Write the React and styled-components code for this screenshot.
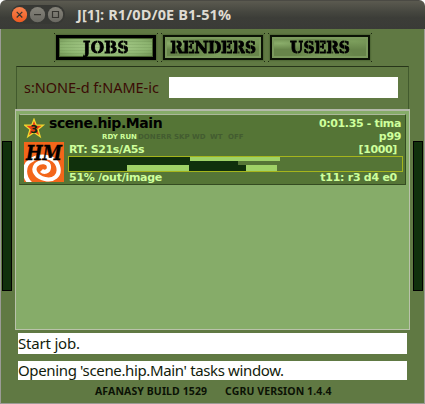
import React from 'react';
import styled, { createGlobalStyle } from 'styled-components';

const GlobalStyle = createGlobalStyle`
  * { box-sizing: border-box; }
  body { margin: 0; background: #fff; }
`;

const Window = styled.div`
  width: 425px;
  height: 404px;
  display: flex;
  flex-direction: column;
  border-radius: 6px 6px 0 0;
  overflow: hidden;
  font-family: 'Noto Sans', sans-serif;
  white-space: nowrap;
`;

const TitleBar = styled.header`
  height: 29px;
  flex: none;
  display: flex;
  align-items: center;
  padding-left: 11px;
  border-top: 1px solid #4b4a44;
  background: linear-gradient(#5b5a50, #45463f 40%, #3c3d38 60%, #3a3b37);
`;

const Controls = styled.svg`
  width: 54px;
  height: 20px;
  flex: none;
  display: block;
`;

const Title = styled.h1`
  margin: 0 0 0 12px;
  font: 700 14.5px/28px 'Open Sans', sans-serif;
  letter-spacing: ${p => p.$ls}px;
  color: #dfdbd2;
`;

const Body = styled.main`
  flex: 1;
  min-height: 0;
  display: flex;
  background: #607943;
  border: 1px solid #9b9b96;
  border-top: 0;
  padding-left: 1px;
  padding-right: 1px;
`;

const SideHandle = styled.div`
  width: 10px;
  height: 150px;
  flex: none;
  margin-top: 112px;
  background: #10300c;
  border: 1px solid #000;
`;

const Center = styled.div`
  width: 395px;
  flex: none;
  margin: 0 3px;
  display: flex;
  flex-direction: column;
`;

const Tabs = styled.nav`
  display: flex;
  gap: 3px;
  padding: 4px 0 0 39px;
`;

const dot = pos => `radial-gradient(#1b2710, #1b2710) ${pos} / 1px 1px no-repeat`;

const TabFrame = styled.div`
  width: 104px;
  height: 29px;
  padding: 2px;
  background: ${dot('0 0')}, ${dot('100% 0')}, ${dot('0 100%')}, ${dot('100% 100%')};
`;

const activeTexture =
  'repeating-linear-gradient(rgba(60,90,40,.12) 0 1px, transparent 1px 3px), radial-gradient(ellipse at 50% 45%, #a5ca88 20%, #8db470 65%, #6c8d50)';
const idleTexture =
  'radial-gradient(ellipse at 8% 30%, #8bae6b 0, transparent 30%), radial-gradient(ellipse at 55% 90%, #7c9e5c 0, transparent 40%), radial-gradient(ellipse at 85% 20%, #7c9e5c 0, transparent 35%), #67854a';

const Tab = styled.button`
  width: 100px;
  height: 25px;
  padding: 0;
  display: flex;
  align-items: center;
  justify-content: center;
  border: ${p => (p.$active ? '3px solid #000' : '2px solid #0b1205')};
  background: ${p => (p.$active ? activeTexture : idleTexture)};
  box-shadow: inset 0 0 0 ${p => (p.$active ? 1 : 2)}px ${p => (p.$active ? '#47632f' : '#7b9a5d')}, 0 0 1px 1px #526b38;
  color: #000;
  font: 700 17px/19px 'DejaVu Serif Condensed', 'DejaVu Serif', serif;
  font-stretch: condensed;
  letter-spacing: ${p => p.$ls}px;
`;

const StencilLetter = styled.span`
  color: transparent;
  -webkit-text-stroke: 0.8px transparent;
  background: ${p => (p.$cut
    ? `linear-gradient(90deg, #000 calc(${p.$cut}% - 0.6px), rgba(0,0,0,.45) calc(${p.$cut}% - 0.5px) calc(${p.$cut}% + 0.5px), #000 calc(${p.$cut}% + 0.6px))`
    : '#000')};
  -webkit-background-clip: text;
  background-clip: text;
`;

const FilterPanel = styled.section`
  height: 43px;
  margin: 4px 1px 0;
  display: flex;
  align-items: flex-start;
  border: 1px solid #425a2d;
  border-top-color: #273519;
  border-bottom: 0;
  padding: 10px 10px 0 7px;
`;

const FilterLabel = styled.label`
  width: 145px;
  flex: none;
  color: #3b0b05;
  font-size: 14.5px;
  line-height: 21px;
  letter-spacing: ${p => p.$ls}px;
`;

const FilterInput = styled.input`
  flex: 1;
  min-width: 0;
  height: 21px;
  padding: 0 2px;
  border: 0;
  outline: 0;
  background: #fff;
`;

const List = styled.section`
  height: 221px;
  background: #86ac69;
  border: 1px solid #b9c2aa;
  border-top: 2px solid #b4b9aa;
  padding: 3px 3px;
`;

const Job = styled.article`
  width: 387px;
  height: 71px;
  display: flex;
  background: #557536;
  border: 1px solid #344b21;
  border-top-color: #acb99b;
  border-left-color: #48632f;
  padding: 2px 2px 0 4px;
  color: #ceff9c;
  font: 700 11px/13px 'DejaVu Sans', sans-serif;
`;

const IconColumn = styled.div`
  width: 45px;
  flex: none;
  padding-top: 1px;
`;

const Star = styled.svg`
  display: block;
  width: 22px;
  height: 22px;
`;

const Logo = styled.svg`
  display: block;
  width: 40px;
  height: 40px;
  margin-top: 2px;
  overflow: visible;
`;

const Details = styled.div`
  flex: 1;
  min-width: 0;
`;

const Header = styled.div`
  height: 26px;
  display: flex;
  justify-content: space-between;
  margin-left: -20px;
  padding-right: 2px;
`;

const JobName = styled.div`
  height: 14px;
  color: #000;
  font-size: 14px;
  line-height: 13px;
  letter-spacing: ${p => p.$ls}px;
`;

const States = styled.div`
  display: flex;
  padding-left: 53px;
`;

const State = styled.span`
  width: 18px;
  flex: none;
  font-size: 7px;
  line-height: 13px;
  color: ${p => (p.$on ? '#ceff9c' : '#435c30')};
`;

const Owner = styled.div`
  text-align: right;
  letter-spacing: ${p => p.$ls}px;
`;

const Line = styled.div`
  height: 13px;
  display: flex;
  justify-content: space-between;
  padding-right: 6px;
  letter-spacing: ${p => p.$ls || 0}px;
`;

const Progress = styled.div`
  width: 335px;
  height: 16px;
  border: 1px solid #a5b51c;
  margin: 0 0 -1px -1px;
`;

const Track = styled.div`
  display: flex;
  height: ${p => p.$h}px;
`;

const Segment = styled.i`
  flex: none;
  width: ${p => p.$w}px;
  background: ${p => (p.$light ? '#9fd267' : '#10300c')};
`;

const Message = styled.div`
  height: ${p => p.$h}px;
  margin: ${p => p.$top}px 3px 0;
  background: #fff;
  color: #121c0c;
  font-size: 15px;
  line-height: ${p => p.$h}px;
  letter-spacing: ${p => p.$ls}px;
`;

const Footer = styled.footer`
  display: flex;
  gap: 18px;
  padding: 4px 0 0 80px;
  color: #0b1205;
  font: 700 10.5px/14px 'Noto Sans', sans-serif;
  letter-spacing: ${p => p.$ls}px;
`;

const states = ['RDY', 'RUN', 'DON', 'ERR', 'SKP', 'WD', 'WT', 'OFF'];

const tracks = [
  { h: 4, parts: [[121, 0], [90, 1]] },
  { h: 4, parts: [[169, 0]] },
  { h: 6, parts: [[58, 0], [62, 1], [57, 0], [31, 1]] },
];

const cuts = { O: 50, B: 47, S: 50, R: 46, D: 48, E: 48, U: 55 };

function Stencil({ word }) {
  return [...word].map((c, i) => <StencilLetter key={i} $cut={cuts[c]}>{c}</StencilLetter>);
}

function WindowControls() {
  return (
    <Controls viewBox="0 0 54 20">
      <defs>
        <linearGradient id="close" x2="0" y2="1">
          <stop stopColor="#f9834f" />
          <stop offset="1" stopColor="#ee5a20" />
        </linearGradient>
        <linearGradient id="grey" x2="0" y2="1">
          <stop stopColor="#85837a" />
          <stop offset="1" stopColor="#6a6962" />
        </linearGradient>
      </defs>
      <rect width="54" height="19" rx="9.5" fill="#373834" />
      <circle cx="8.5" cy="9.7" r="7.6" fill="url(#close)" />
      <circle cx="26.5" cy="9.7" r="7.6" fill="url(#grey)" />
      <circle cx="44.5" cy="9.7" r="7.6" fill="url(#grey)" />
      <g fill="none" stroke="#35342f" strokeWidth="1.2">
        <path d="M5.7 6.9l5.6 5.6M11.3 6.9l-5.6 5.6M23 9.7h7M41.5 6.5h6v6h-6z" />
      </g>
    </Controls>
  );
}

function PriorityStar() {
  return (
    <Star viewBox="0 0 22 22">
      <path d="M10 1.2l2.3 6h7l-5.3 4.2 2.2 7.2L10 14.5l-6.2 4.1L6 11.4.7 7.2h7z" fill="#e63f17" stroke="#f2d72e" strokeWidth="1.3" />
      <text x="10.2" y="15" textAnchor="middle" fontFamily="DejaVu Sans" fontWeight="700" fontSize="11" fill="#102c10">3</text>
    </Star>
  );
}

function HoudiniLogo() {
  return (
    <Logo viewBox="0 0 40 40">
      <clipPath id="logoBox"><rect width="40" height="40" /></clipPath>
      <rect width="40" height="40" fill="#f3661a" />
      <path
        d="M7 42C-1 35 -1 23 7 18.500C16 12 31 14 34 24C37 34 29 39 21 37C12 35 8 28 12 23C17 18 25 20 25 25C25 30 20 31 17.500 28.500"
        fill="none"
        stroke="#fff"
        strokeWidth="4.2"
        clipPath="url(#logoBox)"
      />
      <text x="2" y="18" textLength="36" lengthAdjust="spacingAndGlyphs" fontFamily="DejaVu Serif" fontStyle="italic" fontWeight="700" fontSize="20.5" fill="#000" stroke="#000" strokeWidth="0.4">HM</text>
    </Logo>
  );
}

export default function App() {
  return (
    <>
      <GlobalStyle />
      <Window>
        <TitleBar>
          <WindowControls />
          <Title $ls={0.1}>J[1]: R1/0D/0E B1-51%</Title>
        </TitleBar>
        <Body>
          <SideHandle />
          <Center>
            <Tabs>
              <TabFrame><Tab $active $ls={0.3}><Stencil word="JOBS" /></Tab></TabFrame>
              <TabFrame><Tab $ls={-0.2}><Stencil word="RENDERS" /></Tab></TabFrame>
              <TabFrame><Tab $ls={0}><Stencil word="USERS" /></Tab></TabFrame>
            </Tabs>
            <FilterPanel>
              <FilterLabel $ls={-0.03}>s:NONE-d f:NAME-ic</FilterLabel>
              <FilterInput aria-label="Filter" />
            </FilterPanel>
            <List>
              <Job>
                <IconColumn>
                  <PriorityStar />
                  <HoudiniLogo />
                </IconColumn>
                <Details>
                  <Header>
                    <div>
                      <JobName $ls={-0.42}>scene.hip.Main</JobName>
                      <States>
                        {states.map((s, i) => <State key={s} $on={i < 2}>{s}</State>)}
                      </States>
                    </div>
                    <Owner $ls={-0.35}>
                      <div>0:01.35 - tima</div>
                      <div>p99</div>
                    </Owner>
                  </Header>
                  <Line $ls={-0.36}><span>RT: S21s/A5s</span><span>[1000]</span></Line>
                  <Progress>
                    {tracks.map((t, i) => (
                      <Track key={i} $h={t.h}>
                        {t.parts.map(([w, light], j) => <Segment key={j} $w={w} $light={light} />)}
                      </Track>
                    ))}
                  </Progress>
                  <Line $ls={-0.27}><span>51% /out/image</span><span>t11: r3 d4 e0</span></Line>
                </Details>
              </Job>
            </List>
            <Message $h={21} $top={3} $ls={-0.2}>Start job.</Message>
            <Message $h={19} $top={7} $ls={-0.36}>Opening 'scene.hip.Main' tasks window.</Message>
            <Footer $ls={0.1}><span>AFANASY BUILD 1529</span><span>CGRU VERSION 1.4.4</span></Footer>
          </Center>
          <SideHandle />
        </Body>
      </Window>
    </>
  );
}
